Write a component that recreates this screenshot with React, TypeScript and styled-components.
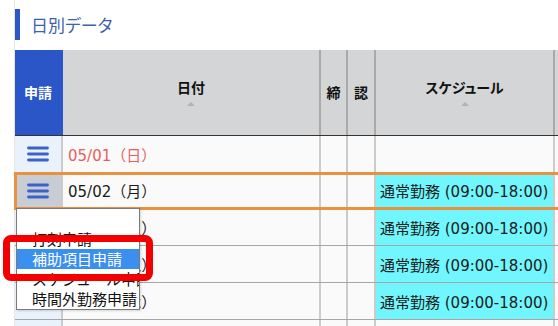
import React from 'react'
import styled, { createGlobalStyle } from 'styled-components'

const GlobalStyle = createGlobalStyle`
  html, body {
    margin: 0;
    padding: 0;
    background: #ffffff;
    overflow: hidden;
  }
  body {
    font-family: "Noto Sans CJK JP", "Liberation Sans", sans-serif;
  }
`

interface DayRow {
  date: string
  holiday?: boolean
  schedule?: string
  selected?: boolean
}

const normal = '通常勤務 (09:00-18:00)'

const rows: DayRow[] = [
  { date: '05/01（日）', holiday: true },
  { date: '05/02（月）', schedule: normal, selected: true },
  { date: '05/03（火）', schedule: normal },
  { date: '05/04（水）', schedule: normal },
  { date: '05/05（木）', schedule: normal },
  { date: '05/06（金）' },
]

const menuItems = ['', '打刻申請', '補助項目申請', 'スケジュール申請', '時間外勤務申請']

const COLS = '48px 258px 27px 28px 179px 1fr'

const BarsIcon = () => (
  <svg width="22" height="16" viewBox="0 0 22 16">
    <g stroke="#3c62c8" strokeWidth="2.8" strokeLinecap="round">
      <line x1="1.5" y1="2" x2="20.5" y2="2" />
      <line x1="1.5" y1="8" x2="20.5" y2="8" />
      <line x1="1.5" y1="14" x2="20.5" y2="14" />
    </g>
  </svg>
)

const App = () => {
  return (
    <Page>
      <GlobalStyle />
      <Frame>
        <TitleRow>
          <TitleBar />
          <Title>日別データ</Title>
        </TitleRow>

        <Table>
          <HeaderRow>
            <HeadCell $blue>申請</HeadCell>
            <HeadCell>
              <HeadLabel>日付</HeadLabel>
              <SortMark />
            </HeadCell>
            <HeadCell>締</HeadCell>
            <HeadCell>認</HeadCell>
            <HeadCell>
              <HeadLabel>スケジュール</HeadLabel>
              <SortMark />
            </HeadCell>
            <HeadCell />
          </HeaderRow>

          {rows.map((row) => (
            <Row key={row.date} $selected={row.selected}>
              <ApplyCell $hover={row.selected}>
                <BarsIcon />
              </ApplyCell>
              <DateCell $holiday={row.holiday}>{row.date}</DateCell>
              <Cell />
              <Cell />
              <ScheduleCell $filled={!!row.schedule}>{row.schedule}</ScheduleCell>
              <Cell />
            </Row>
          ))}
        </Table>
      </Frame>

      <Menu>
        {menuItems.map((item, index) => (
          <MenuItem key={index} $active={index === 2}>
            {item}
          </MenuItem>
        ))}
      </Menu>
      <Marker />
    </Page>
  )
}

export default App

const Page = styled.div`
  position: relative;
  width: 558px;
  height: 326px;
  padding-left: 14px;
  box-sizing: border-box;
  overflow: hidden;
`

const Frame = styled.div`
  border-left: 1px solid #e6e6e6;
  padding-top: 9px;
  height: 100%;
  box-sizing: border-box;
`

const TitleRow = styled.div`
  display: flex;
  align-items: center;
  height: 31px;
  margin-bottom: 10px;
`

const TitleBar = styled.div`
  width: 5px;
  height: 100%;
  background-color: #2a56c8;
`

const Title = styled.div`
  margin-left: 11px;
  font-size: 17px;
  font-feature-settings: "palt";
  color: #3d62ab;
`

const Table = styled.div`
  width: 560px;
`

const HeaderRow = styled.div`
  display: grid;
  grid-template-columns: ${COLS};
  height: 86px;
  border-bottom: 1px solid #333333;
  box-sizing: border-box;
`

const HeadCell = styled.div<{ $blue?: boolean }>`
  display: flex;
  flex-direction: column;
  align-items: center;
  justify-content: center;
  background-color: ${(p) => (p.$blue ? '#2a56c8' : '#d3d5d6')};
  border-right: 2px solid ${(p) => (p.$blue ? '#2a56c8' : '#a9a9a9')};
  color: ${(p) => (p.$blue ? '#ffffff' : '#111111')};
  font-size: 14px;
  font-weight: 700;
  font-feature-settings: "palt";
  padding-bottom: 1px;
  box-sizing: border-box;
`

const HeadLabel = styled.div`
  line-height: 18px;
`

const SortMark = styled.div`
  width: 0;
  height: 0;
  margin-top: 6px;
  border-left: 4px solid transparent;
  border-right: 4px solid transparent;
  border-bottom: 4px solid #b3b3b3;
`

const Row = styled.div<{ $selected?: boolean }>`
  position: relative;
  display: grid;
  grid-template-columns: ${COLS};
  height: ${(p) => (p.$selected ? '36px' : '37px')};
  border-bottom: 1px solid #a6a6a6;
  box-sizing: border-box;
  background-color: #fafafa;
  ${(p) =>
    p.$selected &&
    `
    z-index: 1;
    outline: 3px solid #e8913f;
    outline-offset: -2px;
  `}
`

const Cell = styled.div`
  border-right: 2px solid #cbcbcb;
  box-sizing: border-box;
  display: flex;
  align-items: center;
`

const ApplyCell = styled(Cell)<{ $hover?: boolean }>`
  justify-content: center;
  background-color: ${(p) => (p.$hover ? '#c7ccd5' : '#e9f1fb')};
`

const DateCell = styled(Cell)<{ $holiday?: boolean }>`
  padding-left: 5px;
  font-family: "DejaVu Sans", "Noto Sans CJK JP", sans-serif;
  font-size: 15px;
  color: ${(p) => (p.$holiday ? '#e8605c' : '#1a1a1a')};
  white-space: nowrap;
`

const ScheduleCell = styled(Cell)<{ $filled?: boolean }>`
  padding-left: 4px;
  font-family: "DejaVu Sans", "Noto Sans CJK JP", sans-serif;
  font-size: 15px;
  color: #1a1a1a;
  white-space: nowrap;
  overflow: hidden;
  background-color: ${(p) => (p.$filled ? '#70f6fc' : 'transparent')};
`

const Menu = styled.div`
  position: absolute;
  left: 16px;
  top: 208px;
  z-index: 5;
  width: 124px;
  background-color: #ffffff;
  border: 1px solid #7a7a7a;
  box-sizing: border-box;
  box-shadow: 1px 1px 2px rgba(0, 0, 0, 0.15);
`

const MenuItem = styled.div<{ $active?: boolean }>`
  height: 20px;
  line-height: 20px;
  padding-left: 15px;
  font-size: 15px;
  white-space: nowrap;
  overflow: hidden;
  color: ${(p) => (p.$active ? '#ffffff' : '#111111')};
  background-color: ${(p) => (p.$active ? '#3b8fef' : 'transparent')};
`

const Marker = styled.div`
  position: absolute;
  left: 3px;
  top: 235px;
  z-index: 6;
  width: 150px;
  height: 46px;
  border: 7px solid #f40000;
  border-radius: 8px;
  box-sizing: border-box;
`
